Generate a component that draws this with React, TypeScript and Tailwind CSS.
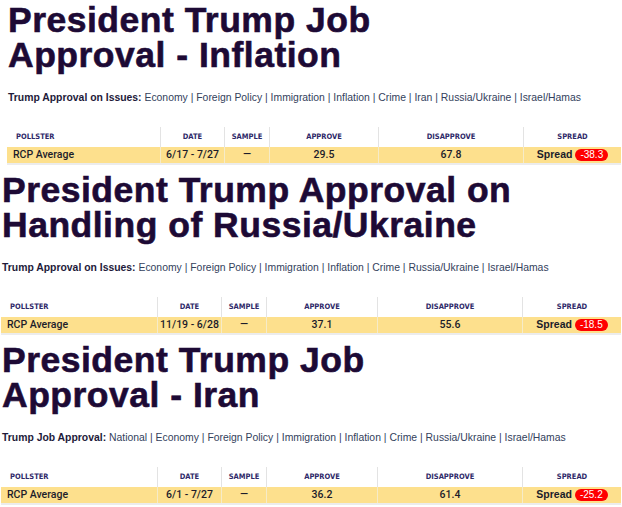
import React from 'react'

interface Poll {
  range: string
  approve: string
  disapprove: string
  spread: string
}

interface SectionProps {
  lines: string[]
  label: string
  links: string[]
  poll: Poll
  padClass: string
  gridClass: string
}

const headers = ['POLLSTER', 'DATE', 'SAMPLE', 'APPROVE', 'DISAPPROVE', 'SPREAD']

function PollSection({ lines, label, links, poll, padClass, gridClass }: SectionProps) {
  const cells = ['RCP Average', poll.range, '—', poll.approve, poll.disapprove]

  return (
    <section className={`h-[170px] pt-[3px] pr-px ${padClass}`}>
      {/* Title */}
      <h1 className="text-[35.5px] leading-[35px] font-bold tracking-[0.5px] text-[#1d0a35] [-webkit-text-stroke:0.6px_#1d0a35]">
        {lines.map((line) => (
          <div key={line}>{line}</div>
        ))}
      </h1>

      {/* Related issues */}
      <p className="mt-[18px] text-[10.4px] leading-[14px] text-[#33415c]">
        <span className="font-bold text-[#1e1a3a]">{label}</span>{' '}
        {links.map((link, i) => (
          <span key={link}>
            {i > 0 && <span> | </span>}
            <span>{link}</span>
          </span>
        ))}
      </p>

      {/* Table */}
      <div className="mt-[22px] -ml-px">
        <div className={`grid ${gridClass} h-[20px]`}>
          {headers.map((h, i) => (
            <div
              key={h}
              className={`flex items-center text-[7.5px] font-bold text-[#2e2868] font-['Liberation_Sans_Narrow','DejaVu_Sans_Condensed',sans-serif] ${
                i === 0 ? 'pl-[9px]' : 'justify-center border-l border-[#e3e3e3]'
              }`}
            >
              {h}
            </div>
          ))}
        </div>
        <div className={`grid ${gridClass} h-[18px] bg-[#fde08d] border-b-2 border-[#ececec]`}>
          {cells.map((c, i) => (
            <div
              key={i}
              className={`flex items-center text-[10.5px] font-medium text-[#1c1c2a] font-['Roboto',sans-serif] ${
                i === 0 ? 'pl-[6px]' : 'justify-center border-l border-[#f6ebc8]'
              }`}
            >
              {c}
            </div>
          ))}
          <div className="flex items-center justify-center gap-[3px] border-l border-[#f6ebc8]">
            <span className="text-[10.5px] font-bold text-[#1c1c2a]">Spread</span>
            <span className="h-[12px] px-[5px] flex items-center rounded-full bg-[#ff0000] text-[10px] leading-none text-white">
              {poll.spread}
            </span>
          </div>
        </div>
      </div>
    </section>
  )
}

export default function App() {
  return (
    <div className="w-[622px] h-[507px] overflow-hidden bg-white font-[family-name:'Liberation_Sans',Arial,sans-serif]">
      <PollSection
        lines={['President Trump Job', 'Approval - Inflation']}
        label="Trump Approval on Issues:"
        links={['Economy', 'Foreign Policy', 'Immigration', 'Inflation', 'Crime', 'Iran', 'Russia/Ukraine', 'Israel/Hamas']}
        poll={{ range: '6/17 - 7/27', approve: '29.5', disapprove: '67.8', spread: '-38.3' }}
        padClass="pl-[8px]"
        gridClass="grid-cols-[153px_64px_45px_109px_145px_98px]"
      />
      <PollSection
        lines={['President Trump Approval on', 'Handling of Russia/Ukraine']}
        label="Trump Approval on Issues:"
        links={['Economy', 'Foreign Policy', 'Immigration', 'Inflation', 'Crime', 'Russia/Ukraine', 'Israel/Hamas']}
        poll={{ range: '11/19 - 6/28', approve: '37.1', disapprove: '55.6', spread: '-18.5' }}
        padClass="pl-[2px]"
        gridClass="grid-cols-[156px_64px_45px_111px_145px_99px]"
      />
      <PollSection
        lines={['President Trump Job', 'Approval - Iran']}
        label="Trump Job Approval:"
        links={['National', 'Economy', 'Foreign Policy', 'Immigration', 'Inflation', 'Crime', 'Russia/Ukraine', 'Israel/Hamas']}
        poll={{ range: '6/1 - 7/27', approve: '36.2', disapprove: '61.4', spread: '-25.2' }}
        padClass="pl-[2px]"
        gridClass="grid-cols-[156px_64px_45px_111px_145px_99px]"
      />
    </div>
  )
}
